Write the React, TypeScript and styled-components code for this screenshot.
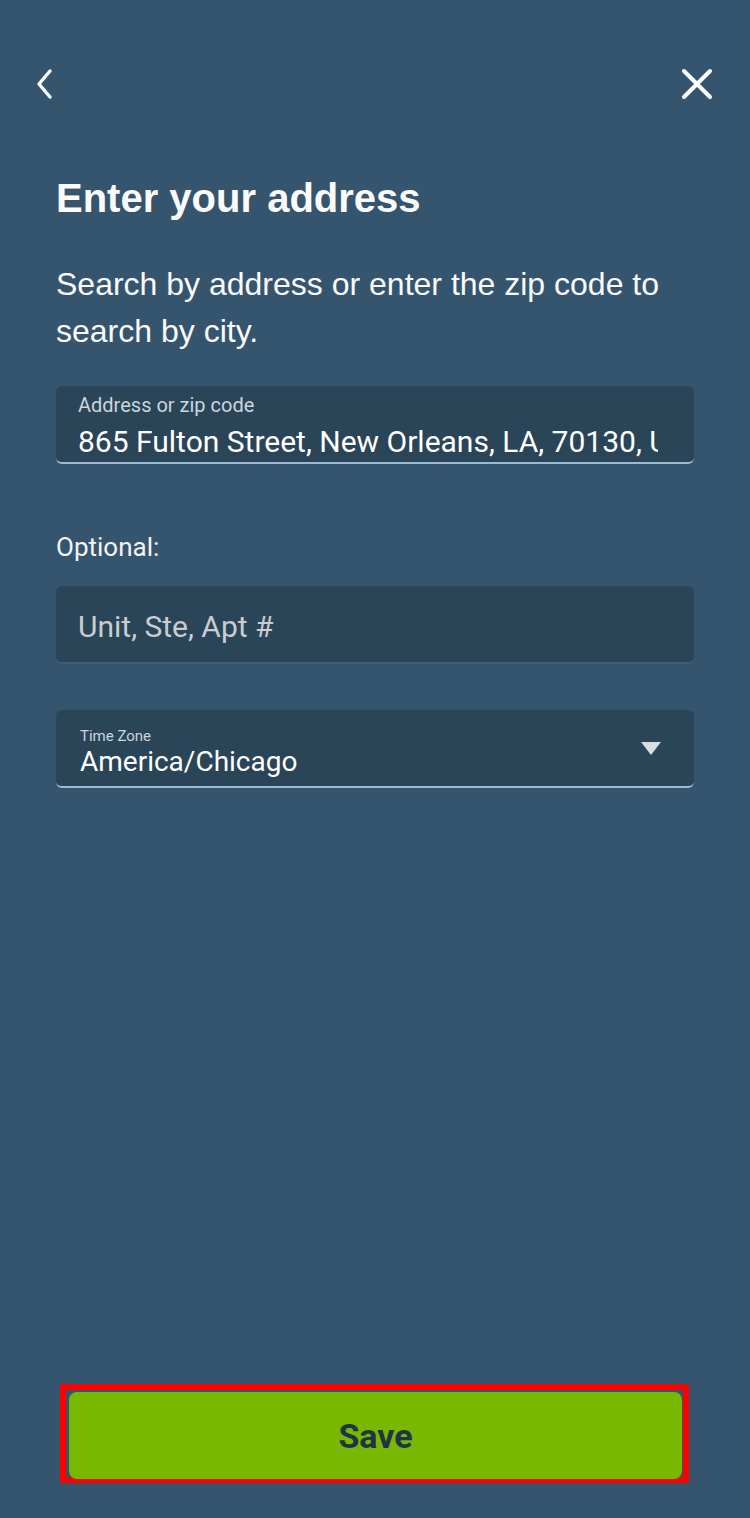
import React from 'react';
import styled, { createGlobalStyle } from 'styled-components';

const GlobalStyle = createGlobalStyle`
  html, body {
    margin: 0;
    padding: 0;
    background: #35556f;
  }
  * { box-sizing: border-box; }
`;

const Page = styled.div`
  min-height: 1518px;
  display: flex;
  flex-direction: column;
  background: #35556f;
  color: #fff;
`;

const TopBar = styled.div`
  display: flex;
  justify-content: space-between;
  align-items: center;
  padding: 66px 36px 0 34px;
  height: 102px;
`;

const IconButton = styled.button`
  background: none;
  border: 0;
  padding: 0;
  display: flex;
  align-items: center;
  justify-content: center;
  cursor: pointer;
`;

const Content = styled.div`
  padding: 0 56px;
  display: flex;
  flex-direction: column;
`;

const Title = styled.h1`
  margin: 73px 0 0;
  font-family: "Liberation Sans", Arial, sans-serif;
  font-weight: 700;
  font-size: 40px;
  line-height: 46px;
  color: #fafafa;
`;

const Intro = styled.p`
  margin: 40px 0 0;
  font-family: "Liberation Sans", Arial, sans-serif;
  font-size: 32px;
  line-height: 47px;
  color: #fafafa;
`;

const FieldSlot = styled.div<{ $top: number }>`
  margin-top: ${p => p.$top}px;
`;

const Field = styled.div<{ $underline: string }>`
  height: 78px;
  background: #2a4458;
  border-radius: 6px;
  border-bottom: 2px solid ${p => p.$underline};
  display: flex;
  align-items: center;
  font-family: Roboto, "Noto Sans", sans-serif;
  overflow: hidden;
`;

const FieldBody = styled.div<{ $pad: number; $top: number }>`
  flex: 1;
  min-width: 0;
  padding-left: ${p => p.$pad}px;
  padding-top: ${p => p.$top}px;
  display: flex;
  flex-direction: column;
`;

const FieldLabel = styled.span<{ $size: number }>`
  font-size: ${p => p.$size}px;
  line-height: 1.1;
  color: #ccd5dd;
`;

const FieldValue = styled.span<{ $size: number; $gap?: number; $muted?: boolean }>`
  margin-top: ${p => p.$gap ?? 0}px;
  font-size: ${p => p.$size}px;
  line-height: 1.2;
  color: ${p => (p.$muted ? '#c9cdd1' : '#fff')};
  white-space: nowrap;
  overflow: hidden;
  max-width: 580px;
`;

const SectionLabel = styled.div`
  margin: 67px 0 23px;
  font-family: Roboto, "Noto Sans", sans-serif;
  font-size: 26px;
  line-height: 32px;
  color: #f2f4f6;
`;

const Caret = styled.div`
  width: 0;
  height: 0;
  border-left: 10px solid transparent;
  border-right: 10px solid transparent;
  border-top: 13px solid #d9dde0;
  margin-right: 33px;
`;

const Spacer = styled.div`
  flex: 1;
`;

const Footer = styled.div`
  padding: 0 61px 35px 60px;
`;

const Highlight = styled.div`
  border: 6px solid #ff0000;
  padding: 2px 1px 0 3px;
  height: 99px;
`;

const SaveButton = styled.button`
  width: 100%;
  height: 87px;
  border: 0;
  border-radius: 8px;
  background: #78b800;
  color: #1f3447;
  font-family: Roboto, "Noto Sans", sans-serif;
  font-weight: 700;
  font-size: 34px;
  cursor: pointer;
`;

export default function App() {
  return (
    <Page>
      <GlobalStyle />
      <TopBar>
        <IconButton aria-label="Back">
          <svg width="20" height="32" viewBox="0 0 20 32">
            <path d="M16 3 L5 16 L16 29" fill="none" stroke="#fff" strokeWidth="3.4" strokeLinecap="round" strokeLinejoin="round" />
          </svg>
        </IconButton>
        <IconButton aria-label="Close">
          <svg width="34" height="34" viewBox="0 0 34 34">
            <path d="M4 4 L30 30 M30 4 L4 30" fill="none" stroke="#fff" strokeWidth="4" strokeLinecap="round" />
          </svg>
        </IconButton>
      </TopBar>

      <Content>
        <Title>Enter your address</Title>
        <Intro>Search by address or enter the zip code to search by city.</Intro>

        <FieldSlot $top={31}>
          <Field $underline="#9cbad2">
            <FieldBody $pad={22} $top={6}>
              <FieldLabel $size={20}>Address or zip code</FieldLabel>
              <FieldValue $size={30} $gap={8}>865 Fulton Street, New Orleans, LA, 70130, United States</FieldValue>
            </FieldBody>
          </Field>
        </FieldSlot>

        <SectionLabel>Optional:</SectionLabel>
        <Field $underline="#3a5e7c">
          <FieldBody $pad={22} $top={6}>
            <FieldValue $size={30} $muted>Unit, Ste, Apt #</FieldValue>
          </FieldBody>
        </Field>

        <FieldSlot $top={46}>
          <Field $underline="#9cbad2">
            <FieldBody $pad={24} $top={11}>
              <FieldLabel $size={15}>Time Zone</FieldLabel>
              <FieldValue $size={28}>America/Chicago</FieldValue>
            </FieldBody>
            <Caret />
          </Field>
        </FieldSlot>
      </Content>

      <Spacer />

      <Footer>
        <Highlight>
          <SaveButton>Save</SaveButton>
        </Highlight>
      </Footer>
    </Page>
  );
}
